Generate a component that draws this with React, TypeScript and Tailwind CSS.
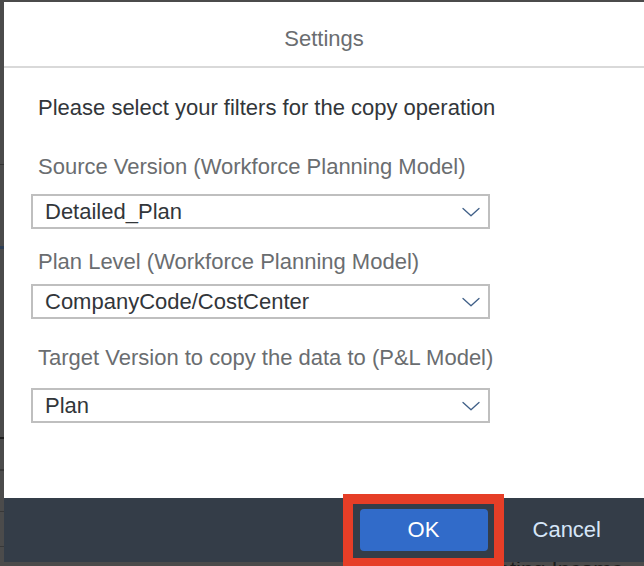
import React from "react";

function Chevron() {
  return (
    <svg width="18" height="10" viewBox="0 0 18 10" fill="none" className="shrink-0">
      <path d="M1 1.5 L9 8.8 L17 1.5" stroke="#3f5f87" strokeWidth="1.3" strokeLinecap="round" strokeLinejoin="round" />
    </svg>
  );
}

function Select({ value, className }: { value: string; className: string }) {
  return (
    <div
      className={`ml-[27px] w-[459px] h-[35px] border-2 border-[#bfbfbf] bg-white flex items-center justify-between pl-[12px] pr-[8px] ${className}`}
    >
      <span className="text-[22px] leading-[26px] text-[#32363a]">{value}</span>
      <Chevron />
    </div>
  );
}

export default function App() {
  return (
    <div className="relative w-[644px] h-[566px] overflow-hidden bg-[#4b4b4b] font-['Liberation_Sans',Arial,sans-serif]">
      {/* background page remnants */}
      <div className="absolute left-0 top-[164px] w-[4px] h-[1px] bg-[#333333]" />
      <div className="absolute left-0 top-[246px] w-[4px] h-[3px] bg-[#2d3e55]" />
      <div className="absolute left-0 top-[437px] w-[4px] h-[2px] bg-[#1e1e1e]" />
      <div className="absolute left-0 top-[469px] w-[4px] h-[2px] bg-[#383838]" />
      <div className="absolute left-0 top-[511px] w-[4px] h-[1px] bg-[#383838]" />
      <div className="absolute left-0 top-[546px] w-[4px] h-[1px] bg-[#383838]" />
      <div className="absolute left-[430px] top-[557px] text-[22px] leading-[26px] text-[#1c1c1c] whitespace-nowrap">
        α Operating Income
      </div>

      {/* dialog */}
      <div className="absolute left-[4px] top-[2px] w-[640px] h-[560px] bg-white flex flex-col">
        <div className="h-[66px] shrink-0 border-b-2 border-[#d9d9d9] flex justify-center pt-[24px]">
          <span className="text-[22px] leading-[26px] text-[#6a6d70]">Settings</span>
        </div>
        <div className="flex-1 flex flex-col">
          <div className="mt-[27px] pl-[34px] text-[22px] leading-[26px] text-[#32363a]">
            Please select your filters for the copy operation
          </div>
          <div className="mt-[33px] pl-[34px] text-[22px] leading-[26px] text-[#6a6d70]">
            Source Version (Workforce Planning Model)
          </div>
          <Select value="Detailed_Plan" className="mt-[14px]" />
          <div className="mt-[20px] pl-[34px] text-[22px] leading-[26px] text-[#6a6d70]">
            Plan Level (Workforce Planning Model)
          </div>
          <Select value="CompanyCode/CostCenter" className="mt-[9px]" />
          <div className="mt-[26px] pl-[34px] text-[22px] leading-[26px] text-[#6a6d70]">
            Target Version to copy the data to (P&amp;L Model)
          </div>
          <Select value="Plan" className="mt-[17px]" />
        </div>
        <div className="h-[64px] shrink-0 bg-[#343d48] flex items-center justify-end pr-[43px] gap-[45px]">
          <button className="w-[128px] h-[42px] rounded-[4px] bg-[#316bc9] text-white text-[22px] leading-[26px] flex items-center justify-center">
            OK
          </button>
          <span className="text-[22px] leading-[26px] text-[#d6e6f8]">Cancel</span>
        </div>
      </div>

      {/* red highlight annotation */}
      <div className="absolute left-[343px] top-[494px] w-[161px] h-[74px] border-[10px] border-[#e63e27]" />
    </div>
  );
}
